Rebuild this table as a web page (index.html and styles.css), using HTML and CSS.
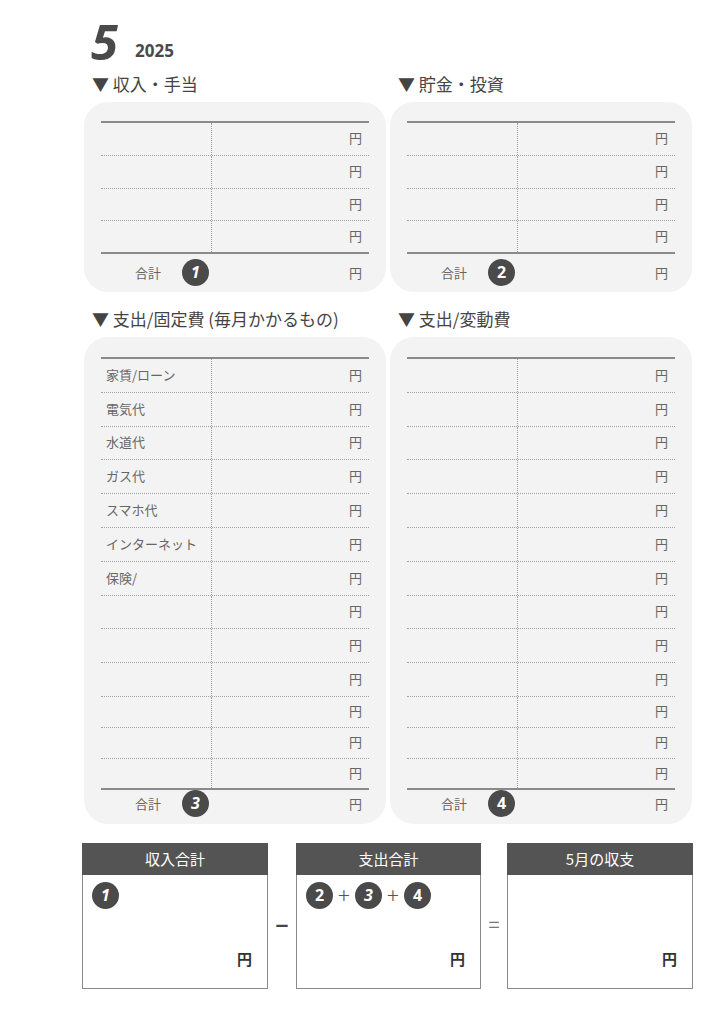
FILE: index.html
```html
<!DOCTYPE html>
<html lang="ja">
<head>
<meta charset="utf-8">
<link rel="stylesheet" href="styles.css">
</head>
<body>
<div class="page">
  <header class="head">
    <span class="month">5</span><span class="year">2025</span>
  </header>

  <section class="pair pair-top">
    <div class="col">
      <h2 class="title">▼ 収入・手当</h2>
      <div class="card card-small">
        <div class="rows">
          <div class="row"><span class="label"></span><span class="amt">円</span></div>
          <div class="row"><span class="label"></span><span class="amt">円</span></div>
          <div class="row"><span class="label"></span><span class="amt">円</span></div>
          <div class="row last"><span class="label"></span><span class="amt">円</span></div>
        </div>
        <div class="total"><span class="sum">合計</span><span class="badge it">1</span><span class="yen">円</span></div>
      </div>
    </div>
    <div class="col">
      <h2 class="title">▼ 貯金・投資</h2>
      <div class="card card-small">
        <div class="rows">
          <div class="row"><span class="label"></span><span class="amt">円</span></div>
          <div class="row"><span class="label"></span><span class="amt">円</span></div>
          <div class="row"><span class="label"></span><span class="amt">円</span></div>
          <div class="row last"><span class="label"></span><span class="amt">円</span></div>
        </div>
        <div class="total"><span class="sum">合計</span><span class="badge">2</span><span class="yen">円</span></div>
      </div>
    </div>
  </section>

  <section class="pair pair-bottom">
    <div class="col">
      <h2 class="title">▼ 支出/固定費 (毎月かかるもの)</h2>
      <div class="card card-big">
        <div class="rows">
          <div class="row tall"><span class="label">家賃/ローン</span><span class="amt">円</span></div>
          <div class="row tall"><span class="label">電気代</span><span class="amt">円</span></div>
          <div class="row tall"><span class="label">水道代</span><span class="amt">円</span></div>
          <div class="row tall"><span class="label">ガス代</span><span class="amt">円</span></div>
          <div class="row tall"><span class="label">スマホ代</span><span class="amt">円</span></div>
          <div class="row tall"><span class="label">インターネット</span><span class="amt">円</span></div>
          <div class="row tall"><span class="label">保険/</span><span class="amt">円</span></div>
          <div class="row tall"><span class="label"></span><span class="amt">円</span></div>
          <div class="row tall"><span class="label"></span><span class="amt">円</span></div>
          <div class="row tall"><span class="label"></span><span class="amt">円</span></div>
          <div class="row short"><span class="label"></span><span class="amt">円</span></div>
          <div class="row short"><span class="label"></span><span class="amt">円</span></div>
          <div class="row short last"><span class="label"></span><span class="amt">円</span></div>
        </div>
        <div class="total"><span class="sum">合計</span><span class="badge it">3</span><span class="yen">円</span></div>
      </div>
    </div>
    <div class="col">
      <h2 class="title">▼ 支出/変動費</h2>
      <div class="card card-big">
        <div class="rows">
          <div class="row tall"><span class="label"></span><span class="amt">円</span></div>
          <div class="row tall"><span class="label"></span><span class="amt">円</span></div>
          <div class="row tall"><span class="label"></span><span class="amt">円</span></div>
          <div class="row tall"><span class="label"></span><span class="amt">円</span></div>
          <div class="row tall"><span class="label"></span><span class="amt">円</span></div>
          <div class="row tall"><span class="label"></span><span class="amt">円</span></div>
          <div class="row tall"><span class="label"></span><span class="amt">円</span></div>
          <div class="row tall"><span class="label"></span><span class="amt">円</span></div>
          <div class="row tall"><span class="label"></span><span class="amt">円</span></div>
          <div class="row tall"><span class="label"></span><span class="amt">円</span></div>
          <div class="row short"><span class="label"></span><span class="amt">円</span></div>
          <div class="row short"><span class="label"></span><span class="amt">円</span></div>
          <div class="row short last"><span class="label"></span><span class="amt">円</span></div>
        </div>
        <div class="total"><span class="sum">合計</span><span class="badge">4</span><span class="yen">円</span></div>
      </div>
    </div>
  </section>

  <section class="summary">
    <div class="box">
      <div class="box-head">収入合計</div>
      <div class="box-body">
        <div class="badges"><span class="badge it">1</span></div>
        <div class="box-yen">円</div>
      </div>
    </div>
    <div class="op op-minus">−</div>
    <div class="box box-mid">
      <div class="box-head">支出合計</div>
      <div class="box-body">
        <div class="badges"><span class="badge">2</span><span class="plus">+</span><span class="badge it">3</span><span class="plus">+</span><span class="badge">4</span></div>
        <div class="box-yen">円</div>
      </div>
    </div>
    <div class="op op-eq">=</div>
    <div class="box">
      <div class="box-head">5月の収支</div>
      <div class="box-body">
        <div class="badges"></div>
        <div class="box-yen">円</div>
      </div>
    </div>
  </section>
</div>
</body>
</html>
```

FILE: styles.css
```css
* { box-sizing: border-box; }
html, body { margin: 0; padding: 0; background: #fff; }
body {
  font-family: "Noto Sans CJK JP", "Noto Sans", sans-serif;
  color: #666;
  width: 724px;
  height: 1024px;
  overflow: hidden;
}
.page {
  padding: 17px 0 0 84px;
}
.head {
  height: 48px;
  line-height: 48px;
  padding-left: 7px;
  font-family: "Open Sans", "Noto Sans", sans-serif;
  color: #4a4a4a;
}
.month {
  font-size: 49px;
  font-weight: 700;
  font-style: italic;
}
.year {
  font-size: 17px;
  font-weight: 700;
  margin-left: 17px;
  vertical-align: 3px;
}
.pair {
  display: flex;
  gap: 4px;
}
.pair-top { margin-top: 7px; }
.pair-bottom { margin-top: 15px; }
.col { width: 302px; }
.title {
  margin: 0 0 6px 8px;
  font-size: 17px;
  font-weight: 400;
  line-height: 24px;
  color: #444;
  white-space: nowrap;
}
.card {
  background: #f3f3f3;
  border-radius: 24px;
  padding: 0 17px;
}
.card-small { padding-top: 19px; padding-bottom: 2px; }
.card-big { padding-top: 20px; padding-bottom: 7px; }
.rows {
  border-top: 2px solid #8a8a8a;
}
.row {
  display: grid;
  grid-template-columns: 110px 1fr;
  height: 32.75px;
  border-bottom: 1px dotted #a0a0a0;
  font-size: 13px;
}
.row.tall { height: 33.8px; }
.row.short { height: 31px; }
.row.last { border-bottom: 2px solid #8a8a8a; }
.label {
  display: flex;
  align-items: center;
  padding-left: 5px;
  padding-bottom: 2px;
  color: #666;
}
.amt {
  display: flex;
  align-items: center;
  justify-content: flex-end;
  padding-right: 7px;
  padding-bottom: 2px;
  border-left: 1px dotted #a0a0a0;
  color: #666;
}
.total {
  display: flex;
  align-items: center;
  padding-left: 34px;
  padding-right: 7px;
  font-size: 13px;
}
.card-small .total { height: 36px; }
.card-big .total { height: 27px; }
.sum { color: #666; }
.total .badge { margin-left: 21px; }
.yen { margin-left: auto; }
.badge {
  display: inline-flex;
  align-items: center;
  justify-content: center;
  width: 27px;
  height: 27px;
  border-radius: 50%;
  background: #4a4a4a;
  color: #fff;
  font-family: "Open Sans", "Noto Sans", sans-serif;
  font-weight: 700;
  font-size: 16px;
  line-height: 1;
  flex: none;
}
.badge.it { font-style: italic; }
.summary {
  display: flex;
  margin-top: 19px;
  margin-left: -2px;
}
.box {
  width: 186px;
  height: 146px;
  border: 1px solid #8a8a8a;
  display: flex;
  flex-direction: column;
}
.box-mid { width: 185px; }
.box-head {
  height: 32px;
  background: #545454;
  color: #fff;
  font-size: 15px;
  line-height: 31px;
  text-align: center;
  margin: -1px -1px 0;
}
.box-body {
  flex: 1;
  display: flex;
  flex-direction: column;
  justify-content: space-between;
  padding: 7px 15px 19px 9px;
}
.badges {
  display: flex;
  align-items: center;
  height: 27px;
}
.plus {
  font-size: 22px;
  font-weight: 300;
  color: #555;
  width: 22px;
  text-align: center;
  line-height: 1;
  margin-top: -2px;
}
.box-yen {
  text-align: right;
  font-size: 15px;
  font-weight: 700;
  color: #333;
}
.op {
  width: 28px;
  display: flex;
  align-items: center;
  justify-content: center;
  padding-top: 16px;
  color: #444;
}
.op-minus { font-size: 22px; font-weight: 700; }
.op-eq { width: 26px; font-size: 20px; color: #777; }
```
